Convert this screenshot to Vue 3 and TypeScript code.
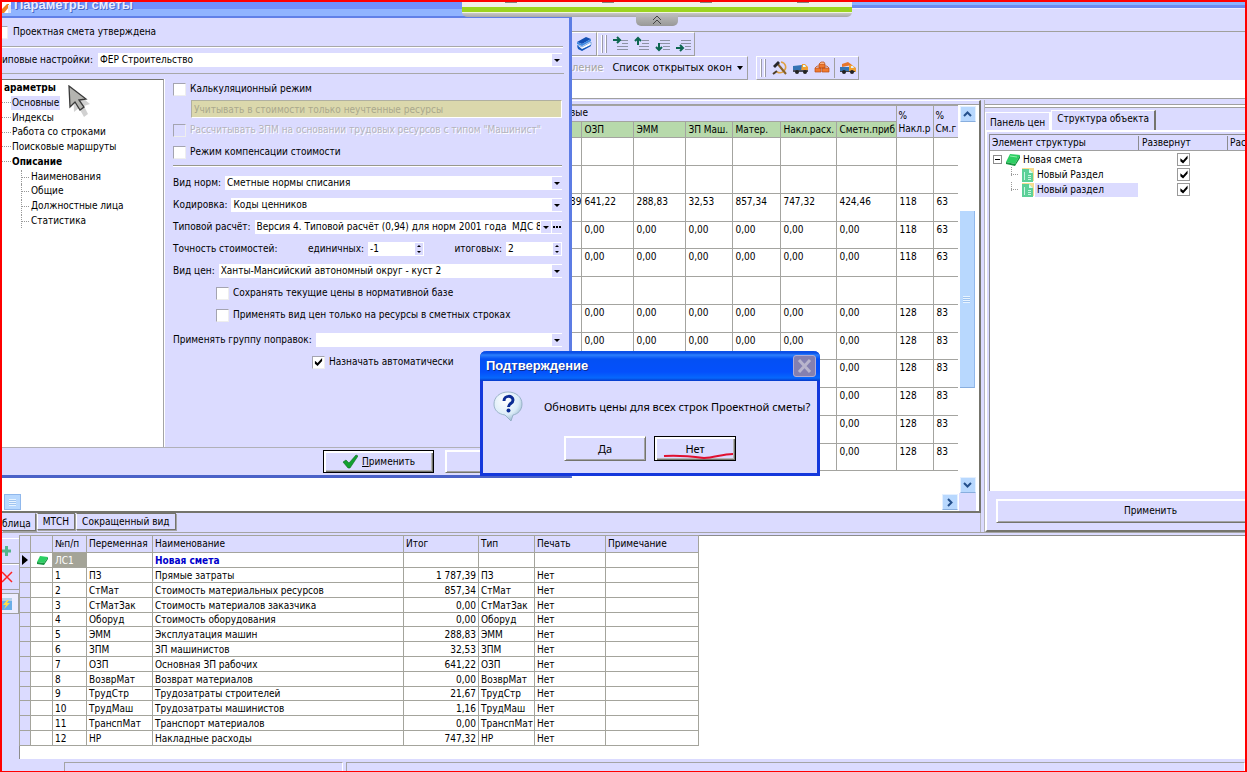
<script setup lang="ts">
import { ref } from 'vue'

interface TreeNode { text: string; level: number; bold?: boolean; active?: boolean }
interface Summary { n: number; code: string; name: string; total: string }

const tree: TreeNode[] = [
  { text: 'араметры', level: 0, bold: true },
  { text: 'Основные', level: 1, active: true },
  { text: 'Индексы', level: 1 },
  { text: 'Работа со строками', level: 1 },
  { text: 'Поисковые маршруты', level: 1 },
  { text: 'Описание', level: 1, bold: true },
  { text: 'Наименования', level: 2 },
  { text: 'Общие', level: 2 },
  { text: 'Должностные лица', level: 2 },
  { text: 'Статистика', level: 2 },
]

const zero = (a: string, b: string): string[] => ['', '0,00', '0,00', '0,00', '0,00', '0,00', '0,00', a, b]
const short = (a: string, b: string): string[] => ['', '', '', '', '', '', '0,00', a, b]
const blank: string[] = Array(9).fill('')
const estimate: string[][] = [
  blank,
  blank,
  ['39', '641,22', '288,83', '32,53', '857,34', '747,32', '424,46', '118', '63'],
  zero('118', '63'),
  zero('118', '63'),
  blank,
  zero('128', '83'),
  zero('128', '83'),
  short('128', '83'),
  short('128', '83'),
  short('128', '83'),
  short('128', '83'),
]
const costHeads = ['ОЗП', 'ЭММ', 'ЗП Маш.', 'Матер.', 'Накл.расх.', 'Сметн.приб']

const summary: Summary[] = [
  { n: 1, code: 'ПЗ', name: 'Прямые затраты', total: '1 787,39' },
  { n: 2, code: 'СтМат', name: 'Стоимость материальных ресурсов', total: '857,34' },
  { n: 3, code: 'СтМатЗак', name: 'Стоимость материалов заказчика', total: '0,00' },
  { n: 4, code: 'Оборуд', name: 'Стоимость оборудования', total: '0,00' },
  { n: 5, code: 'ЭММ', name: 'Эксплуатация машин', total: '288,83' },
  { n: 6, code: 'ЗПМ', name: 'ЗП машинистов', total: '32,53' },
  { n: 7, code: 'ОЗП', name: 'Основная ЗП рабочих', total: '641,22' },
  { n: 8, code: 'ВозврМат', name: 'Возврат материалов', total: '0,00' },
  { n: 9, code: 'ТрудСтр', name: 'Трудозатраты строителей', total: '21,67' },
  { n: 10, code: 'ТрудМаш', name: 'Трудозатраты машинистов', total: '1,16' },
  { n: 11, code: 'ТранспМат', name: 'Транспорт материалов', total: '0,00' },
  { n: 12, code: 'НР', name: 'Накладные расходы', total: '747,32' },
]

const structure = [
  { text: 'Новая смета', root: true, active: false },
  { text: 'Новый Раздел', root: false, active: false },
  { text: 'Новый раздел', root: false, active: true },
]
const expanded = ref([true, true, true])
const autoAssign = ref(true)
const unitDigits = ref('-1')
const totalDigits = ref('2')
</script>

<template>
  <div class="desktop">
    <div class="app-title"></div>
    <div class="menu-strip"></div>

    <div class="toolbars">
      <div class="bar-row first">
        <div class="bar open">
          <button class="tool" aria-label="Справочник">
            <svg width="16" height="16" viewBox="0 0 16 16"><path d="M1 6 10 1l5 2-9 5z" fill="#1450b4" /><path d="M1 6v2l5 2 9-5V3L6 8z" fill="#3c8ae0" /><path d="M2 9l4 2 9-5v3l-9 5-4-2z" fill="#fff" stroke="#5a96d8" stroke-width=".7" /><path d="M1 9l1 4 4 2 9-5V9l-9 4z" fill="#1458bc" /></svg>
          </button>
        </div>
        <div class="bar">
          <i class="grip"></i>
          <button class="tool wide" aria-label="Добавить справа">
            <svg width="16" height="16" viewBox="0 0 16 16"><path d="M7 4.500h8M9 7.500h6M4 10.500h11M4 13.500h11" stroke="#8c92a4" /><path d="M0 4h6M4 1l3 3-3 3" stroke="#0c6650" stroke-width="2" fill="none" /></svg>
          </button>
          <button class="tool wide" aria-label="Переместить вверх">
            <svg width="16" height="16" viewBox="0 0 16 16"><path d="M8 4.500h7M8 7.500h7M5 10.500h10M5 13.500h10" stroke="#8c92a4" /><path d="M4 9V2M1 5l3-3 3 3" stroke="#0c6650" stroke-width="2" fill="none" /></svg>
          </button>
          <button class="tool wide" aria-label="Переместить вниз">
            <svg width="16" height="16" viewBox="0 0 16 16"><path d="M5 4.500h10M5 7.500h10M8 10.500h7M8 13.500h7" stroke="#8c92a4" /><path d="M4 7v7M1 11l3 3 3-3" stroke="#0c6650" stroke-width="2" fill="none" /></svg>
          </button>
          <button class="tool wide" aria-label="Добавить снизу">
            <svg width="16" height="16" viewBox="0 0 16 16"><path d="M5 4.500h10M5 7.500h10M9 10.500h6M9 13.500h6" stroke="#8c92a4" /><path d="M0 12h6M4 9l3 3-3 3" stroke="#0c6650" stroke-width="2" fill="none" /></svg>
          </button>
        </div>
      </div>
      <div class="bar-row second">
        <div class="bar open windows">
          <button class="text-tool" disabled>ление</button>
          <button class="text-tool list">Список открытых окон <i class="caret"></i></button>
        </div>
        <div class="bar">
          <i class="grip"></i>
          <button class="tool wide" aria-label="Работы">
            <svg width="16" height="16" viewBox="0 0 16 16"><path d="M9 2c5 1 6 6 3 9-2 2-5 2-7 1" fill="none" stroke="#e0a040" stroke-width="1.500" /><path d="M5 3l9 11" stroke="#8a6228" stroke-width="2" /><path d="M1 6l5-5 2 2-5 5z" fill="#26262c" /><path d="M1 14l4-3" stroke="#4c3c28" stroke-width="2" /></svg>
          </button>
          <button class="tool wide" aria-label="Машины">
            <svg width="16" height="16" viewBox="0 0 16 16"><path d="M0 6l9-1v5H0z" fill="#3474b4" /><path d="M9 4h3l3 3v4H8z" fill="#f0a030" /><path d="M10 5h2l1 2h-3z" fill="#dff" /><path d="M0 10h15v2H0z" fill="#4a4c5c" /><circle cx="4" cy="12" r="2" fill="#222" /><circle cx="12" cy="12" r="2" fill="#222" /></svg>
          </button>
          <button class="tool wide" aria-label="Материалы">
            <svg width="16" height="16" viewBox="0 0 16 16"><g fill="#f07a30" stroke="#b84c14" stroke-width=".7"><path d="M5 4h6v4H5zM1 8h6v4H1zM8 8h7v4H8z" /><path d="M5 4l2-2h3l1 2M1 8l2-2h2M11 6h2l2 2" fill="#f8b080" /></g></svg>
          </button>
          <i class="divider"></i>
          <button class="tool wide" aria-label="Перевозка">
            <svg width="16" height="16" viewBox="0 0 16 16"><path d="M2 4l6-2 4 3-10 2z" fill="#e8762c" /><path d="M0 7h9v4H0z" fill="#3474b4" /><path d="M9 5h3l4 3v4H9z" fill="#f0a030" /><path d="M11 6h2l1 2h-3z" fill="#def" /><path d="M0 11h15v1H0z" fill="#444" /><circle cx="4" cy="12" r="2" fill="#222" /><circle cx="12" cy="12" r="2" fill="#222" /></svg>
          </button>
        </div>
      </div>
    </div>
    <div class="blank-strip"></div>

    <div class="workspace">
      <div class="left-col">
        <section class="grid-pane">
          <div class="grid-body">
            <table class="estimate">
              <colgroup>
                <col class="c-rest" /><col class="c1" /><col class="c2" /><col class="c3" /><col class="c4" /><col class="c5" /><col class="c6" /><col class="c7" /><col class="c8" />
              </colgroup>
              <thead>
                <tr class="group">
                  <th class="edge">вые</th>
                  <th colspan="6" class="plain"></th>
                  <th rowspan="2" class="two">%<br />Накл.р</th>
                  <th rowspan="2" class="two">%<br />См.г</th>
                </tr>
                <tr class="green"><th></th><th v-for="h in costHeads" :key="h">{{ h }}</th></tr>
              </thead>
              <tbody>
                <tr v-for="(row, i) in estimate" :key="i"><td v-for="(c, k) in row" :key="k">{{ c }}</td></tr>
              </tbody>
            </table>
            <div class="vscroll">
              <button class="sb" aria-label="Вверх"><svg width="9" height="6" viewBox="0 0 9 6"><path d="M1 5l3.500-3.500L8 5" /></svg></button>
              <div class="thumb"><i></i></div>
              <button class="sb" aria-label="Вниз"><svg width="9" height="6" viewBox="0 0 9 6"><path d="M1 1l3.500 3.500L8 1" /></svg></button>
            </div>
          </div>
          <div class="hscroll">
            <div class="hthumb"><i></i></div>
            <button class="sb" aria-label="Вправо"><svg width="6" height="9" viewBox="0 0 6 9"><path d="M1 1l3.500 3.500L1 8" /></svg></button>
            <i class="corner"></i>
          </div>
        </section>
        <div class="low-tabs" role="tablist">
          <button role="tab" class="low-tab on">блица</button>
          <button role="tab" class="low-tab">МТСН</button>
          <button role="tab" class="low-tab">Сокращенный вид</button>
        </div>
      </div>

      <aside class="side">
        <div class="side-grip"></div>
        <div class="side-tabs" role="tablist">
          <button role="tab" class="side-tab">Панель цен</button>
          <button role="tab" class="side-tab on">Структура объекта</button>
        </div>
        <div class="side-page">
          <div class="side-tree">
            <div class="side-row head"><span>Элемент структуры</span><span class="col2">Развернут</span><span class="col3">Рас</span></div>
            <div v-for="(s, i) in structure" :key="i" class="side-row">
              <span class="node" :class="{ child: !s.root }">
                <template v-if="s.root">
                  <i class="minus"></i>
                  <svg width="16" height="14" viewBox="0 0 16 14"><path d="M5 1l10 1-5 9-9-2z" fill="#2ccf62" /><path d="M1 9l9 2 5-9v3l-5 8L1 11z" fill="#159640" /><path d="M5 3l7 1" stroke="#8df0a8" /></svg>
                </template>
                <svg v-else width="14" height="14" viewBox="0 0 14 14"><path d="M1 0h12v13H1z" fill="#f6dc90" /><path d="M1 1h7l4 4v9H1z" fill="#5cd098" /><path d="M8 1v4h4z" fill="#d8fff0" /><path d="M3.500 4v8M7 7.500h3M7 9.500h3M7 11.500h3" stroke="#c8f4e0" /></svg>
                <span class="node-text" :class="{ active: s.active }">{{ s.text }}</span>
              </span>
              <span class="col2 tick"><input v-model="expanded[i]" type="checkbox" class="cb" :aria-label="s.text" /></span>
            </div>
          </div>
          <button class="btn apply-side">Применить</button>
        </div>
      </aside>
    </div>

    <section class="lower">
      <div class="low-body">
        <div class="low-tools">
          <button aria-label="Добавить"><svg width="12" height="14" viewBox="0 0 12 14"><path d="M4.500 2v10M-1 7h10" stroke="#55b58c" stroke-width="3" /></svg></button>
          <button aria-label="Удалить"><svg width="12" height="14" viewBox="0 0 12 14"><path d="M0 2l10 10M10 2L0 12" stroke="#f22" stroke-width="1.500" /></svg></button>
          <button class="boxed" aria-label="Пересчитать"><svg width="12" height="14" viewBox="0 0 12 14"><path d="M0 1h10v12H0z" fill="#6aaee8" /><path d="M0 1h10v3H0z" fill="#b4cfe8" /><path d="M5 3L1 8h3l-2 4 6-6H5l2-3z" fill="#ffdc48" /></svg></button>
        </div>
        <div class="low-table">
          <table class="summary">
            <colgroup>
              <col class="s0" /><col class="s1" /><col class="s2" /><col class="s3" /><col class="s4" /><col class="s5" /><col class="s6" /><col class="s7" /><col class="s8" />
            </colgroup>
            <thead>
              <tr><th></th><th></th><th>№п/п</th><th>Переменная</th><th>Наименование</th><th>Итог</th><th>Тип</th><th>Печать</th><th>Примечание</th></tr>
            </thead>
            <tbody>
              <tr>
                <td class="ind"><i class="current"></i></td>
                <td class="ico"><svg width="13" height="9" viewBox="0 0 13 9"><path d="M4 0l8 1-4 6-7-1z" fill="#2ccf62" /><path d="M1 6l7 1 4-6v2L8 9 1 8z" fill="#159640" /></svg></td>
                <td class="sel">ЛС1</td><td></td><td class="main">Новая смета</td><td></td><td></td><td></td><td></td>
              </tr>
              <tr v-for="r in summary" :key="r.n">
                <td class="ind"></td><td></td><td>{{ r.n }}</td><td>{{ r.code }}</td><td>{{ r.name }}</td><td class="num">{{ r.total }}</td><td>{{ r.code }}</td><td>Нет</td><td></td>
              </tr>
            </tbody>
          </table>
        </div>
      </div>
      <div class="status"><i class="st1"></i><i class="st2"></i></div>
    </section>

    <!-- Estimate parameters window -->
    <div class="params" role="dialog" aria-label="Параметры сметы">
      <div class="params-title">
        <svg width="10" height="12" viewBox="0 0 10 12"><path d="M0 0h9v11H0z" fill="#fff" /><path d="M0 7l5-5h2v3l-5 6H0z" fill="#f08020" /><path d="M6 3h3v8H6z" fill="#e4e4f4" /></svg>
        <span>Параметры сметы</span>
      </div>
      <div class="params-top">
        <input id="approved" type="checkbox" class="cb cut" /><label for="approved">Проектная смета утверждена</label>
      </div>
      <div class="params-preset">
        <label for="preset">иповые настройки:</label>
        <span class="combo"><select id="preset"><option>ФЕР Строительство</option></select></span>
      </div>
      <div class="params-main">
        <ul class="ptree">
          <li v-for="t in tree" :key="t.text" :class="['l' + t.level, { bold: t.bold, active: t.active }]"><span>{{ t.text }}</span></li>
        </ul>
        <div class="form">
          <div class="line"><input id="calc" type="checkbox" class="cb" /><label for="calc">Калькуляционный режим</label></div>
          <div class="line"><input class="muted" aria-label="Режим учёта ресурсов" disabled value="Учитывать в стоимости только неучтенные ресурсы" /></div>
          <div class="line tall"><input id="zpm" type="checkbox" class="cb" disabled /><label for="zpm" class="off">Рассчитывать ЗПМ на основании трудовых ресурсов с типом "Машинист"</label></div>
          <div class="line tall"><input id="comp" type="checkbox" class="cb" /><label for="comp">Режим компенсации стоимости</label></div>
          <hr />
          <div class="line tall"><label for="norm">Вид норм:</label><span class="combo"><select id="norm"><option>Сметные нормы списания</option></select></span></div>
          <div class="line tall"><label for="code">Кодировка:</label><span class="combo"><select id="code"><option>Коды ценников</option></select></span></div>
          <div class="line tall"><label for="calcType">Типовой расчёт:</label><span class="combo dots"><select id="calcType"><option>Версия 4. Типовой расчёт (0,94) для норм 2001 года&nbsp; МДС 8'</option></select><button class="more" aria-label="Выбрать"><i></i><i></i><i></i></button></span></div>
          <div class="line tall digits">
            <span class="cap">Точность стоимостей:</span>
            <label for="unit">единичных:</label><span class="spin"><input id="unit" v-model="unitDigits" /><i></i></span>
            <label for="total" class="right">итоговых:</label><span class="spin"><input id="total" v-model="totalDigits" /><i></i></span>
          </div>
          <div class="line tall"><label for="price">Вид цен:</label><span class="combo"><select id="price"><option>Ханты-Мансийский автономный округ - куст 2</option></select></span></div>
          <div class="line tall in"><input id="keep" type="checkbox" class="cb" /><label for="keep">Сохранять текущие цены в нормативной базе</label></div>
          <div class="line tall in"><input id="only" type="checkbox" class="cb" /><label for="only">Применять вид цен только на ресурсы в сметных строках</label></div>
          <div class="line tall gap"><label for="grp">Применять группу поправок:</label><span class="combo"><select id="grp"><option></option></select></span></div>
          <div class="line tall auto"><input id="auto" v-model="autoAssign" type="checkbox" class="cb" /><label for="auto">Назначать автоматически</label></div>
        </div>
      </div>
      <div class="params-foot">
        <button class="btn default">
          <svg width="16" height="15" viewBox="0 0 16 15"><path d="M1 8l3-2 3 3 7-8 2 1-8 12H6z" fill="#12a030" stroke="#0a6c20" stroke-width=".6" /></svg>
          <span><u>П</u>рименить</span>
        </button>
        <button class="btn" aria-label="Отмена"></button>
      </div>
    </div>

    <!-- Confirmation window -->
    <div class="confirm" role="alertdialog" aria-labelledby="confirmTitle">
      <div class="confirm-title">
        <span id="confirmTitle">Подтверждение</span>
        <button aria-label="Закрыть"><svg width="23" height="22" viewBox="0 0 23 22"><path d="M6 5l11 12M17 5L6 17" stroke="#b8b4cc" stroke-width="3" /></svg></button>
      </div>
      <div class="confirm-body">
        <svg class="bubble" width="32" height="32" viewBox="0 0 32 32">
          <defs><radialGradient id="bub" cx=".4" cy=".3" r=".8"><stop offset="0" stop-color="#fff" /><stop offset=".6" stop-color="#dcecf8" /><stop offset="1" stop-color="#84a8c4" /></radialGradient></defs>
          <path d="M16 2c8 0 14 5 14 12 0 6-4 10-9 11l-2 6-6-6C6 24 2 20 2 14 2 7 8 2 16 2z" fill="url(#bub)" stroke="#8ca8bc" stroke-width=".8" />
          <path d="M12 11c0-6 9-6 9-1 0 4-4.500 3-4.500 7" fill="none" stroke="#0c2c94" stroke-width="3" /><circle cx="16.500" cy="20.500" r="2" fill="#0c2c94" />
        </svg>
        <p>Обновить цены для всех строк Проектной сметы?</p>
      </div>
      <div class="confirm-foot">
        <button class="btn">Да</button>
        <button class="btn default">Нет<svg class="mark" width="72" height="8" viewBox="0 0 72 8"><path d="M1 4c12-1 25 0 40 2 10 0 18-4 29-4" fill="none" stroke="#e01030" stroke-width="2" /></svg></button>
      </div>
    </div>

    <!-- Screen-sharing panel -->
    <div class="share">
      <div class="share-strip"><i></i><i></i><i></i><i></i></div>
      <button class="share-tab" aria-label="Показать панель"><svg width="10" height="10" viewBox="0 0 10 10"><path d="M1 5l4-4 4 4M1 9l4-4 4 4" fill="none" stroke="#444" /></svg></button>
    </div>

    <svg class="pointer" width="24" height="34" viewBox="0 0 24 34">
      <path d="M5 5l1 22 5-4 5 9 4-3-4-8 6-2z" fill="#000" opacity=".18" />
      <path d="M1 1l1 21 5-5 5 8 4-3-5-7 7-1z" fill="#b4b4b0" stroke="#3a3a3a" stroke-width="1.300" />
    </svg>
  </div>
</template>

<style>
body { margin: 0; background: #dbdbff; }
</style>

<style scoped>
* { box-sizing: border-box; }
.desktop {
  position: relative; min-height: 100vh; display: flex; flex-direction: column; overflow: hidden;
  border: 2px solid #f00; background: #dbdbff; color: #000;
  font: 10px/14px "DejaVu Sans Condensed", "Liberation Sans", Arial, sans-serif;
}
button, input, select { font: inherit; color: inherit; border: 0; border-radius: 0; padding: 0; margin: 0; background: none; }
button { white-space: nowrap; }
label { white-space: nowrap; }
svg { display: block; flex: none; }

.app-title { height: 7px; background: linear-gradient(#8ab4ff 50%, #6c8cf0 50%); border-bottom: 1px solid #eef; }
.menu-strip { height: 23px; border-bottom: 1px solid #a0a09c; }
.bar-row { display: flex; padding-left: 570px; }
.bar-row.first { height: 24px; }
.bar-row.second { height: 24px; }
.bar { display: flex; align-items: center; border: 1px solid; border-color: #fff #a0a0a0 #a0a0a0 #fff; }
.bar.open { border-left: 0; }
.grip { width: 6px; align-self: stretch; margin: 2px 3px; border: solid #9a9aa8; border-width: 0 1px; border-left-color: #fff; background: linear-gradient(90deg, #9a9aa8 1px, transparent 1px 3px, #fff 3px 4px, transparent 4px); }
.tool { width: 24px; height: 20px; display: flex; align-items: center; justify-content: center; }
.tool.wide { width: 21px; }
.divider { width: 1px; height: 20px; background: #a0a0a0; margin: 0 2px; }
.windows { width: 176px; margin-right: 8px; gap: 9px; font-size: 11px; }
.text-tool:disabled { color: #a4a4a0; text-shadow: 1px 1px #fff; }
.list { display: flex; align-items: center; gap: 5px; }
.caret { border: 3px solid transparent; border-top: 4px solid #000; border-bottom: 0; }
.blank-strip { height: 19px; background: #fff; border-bottom: 1px solid #a0a0a0; }

.workspace { display: flex; gap: 3px; padding-top: 1px; }
.left-col { flex: 1; min-width: 0; display: flex; flex-direction: column; }
.grid-pane { padding-top: 3px; border-right: 2px solid #74746c; border-bottom: 2px solid #74746c; border-top: 1px solid #fff; background: linear-gradient(#dbdbff 3px, #fff 3px); }
.grid-body { display: flex; border-top: 1px solid #a0a0a0; padding-right: 3px; }
.estimate { flex: 1; table-layout: fixed; width: 0; border-collapse: collapse; align-self: flex-start; }
.c1, .c2 { width: 52px; } .c3 { width: 47px; } .c4 { width: 48px; } .c5 { width: 56px; } .c6 { width: 60px; } .c7 { width: 37px; } .c8 { width: 24px; }
.estimate th, .estimate td { padding: 0 0 0 2px; font-weight: 400; text-align: left; vertical-align: top; border: 1px solid #a4a4a0; overflow: hidden; white-space: nowrap; }
.estimate td { padding-top: 1px; }
.estimate th:last-child, .estimate td:last-child { border-right: 0; }
.estimate .group { height: 16px; background: #dbdbff; }
.estimate .group .edge { padding-left: 567px; border-right: 0; overflow: visible; }
.estimate .group .plain { border-left: 0; }
.estimate .two { line-height: 13px; padding: 3px 0 0 1px; }
.estimate .green { height: 16px; }
.estimate .green th { background: #b7d9ab; vertical-align: middle; }
.estimate .green th:last-child { border-right: 1px solid #a4a4a0; }
.estimate tbody tr { height: 28px; }
.estimate tbody tr:nth-child(4n) { height: 27px; }
.estimate td:first-child { text-align: right; }
.vscroll { width: 18px; display: flex; flex-direction: column; padding: 1px 0 0 2px; min-height: 388px; }
.sb { width: 16px; height: 16px; display: flex; align-items: center; justify-content: center; background: #b8d8fe; border: 1px solid #e4f0ff; border-bottom-color: #88aede; flex: none; }
.sb path { fill: none; stroke: #24508c; stroke-width: 2; }
.thumb { width: 15px; height: 177px; margin: 89px 0 auto; background: #b8d8fe; border-right: 1px solid #90b8ec; border-bottom: 1px solid #88aede; display: flex; align-items: center; justify-content: center; }
.thumb i, .hthumb i { width: 7px; height: 7px; background: repeating-linear-gradient(#e8f4ff 0 1px, #a0c4f0 1px 2px); }
.hscroll { display: flex; height: 18px; align-items: center; padding: 0 3px 0 2px; }
.hthumb { width: 17px; height: 16px; background: #b8d8fe; border: 1px solid #90b8ec; display: flex; align-items: center; justify-content: center; margin-right: auto; }
.corner { width: 17px; height: 18px; background: #dbdbff; margin-left: 1px; }

.side { flex: none; width: 21%; display: flex; flex-direction: column; border-left: 1px solid #b4b4bc; overflow: hidden; }
.side-grip { height: 4px; margin: 4px 0 2px; border: solid #a0a0a0; border-width: 1px 0; background: #fff; flex: none; }
.side-tabs { display: flex; align-items: flex-end; height: 20px; flex: none; }
.side-tab { height: 18px; padding: 2px 4px 0 4px; border: 1px solid #fff; border-width: 1px 2px 0 1px; }
.side-tab.on { height: 20px; padding: 0 5px 3px 5px; border-right: 2px solid #74746c; background: #dbdbff; }
.side-page { flex: 1; border: 2px solid #fff; border-right: 0; border-bottom: 2px solid #74746c; padding: 2px 0 7px 2px; display: flex; flex-direction: column; }
.side-tree { flex: 1; background: #fff; border-left: 1px solid #8c8c90; border-top: 1px solid #8c8c90; }
.side-row { display: flex; height: 15px; align-items: center; white-space: nowrap; }
.side-row.head { height: 16px; background: #dbdbff; border-bottom: 1px solid #a0a0a0; margin-bottom: 1px; }
.side-row > span:first-child { width: 148px; padding-left: 2px; flex: none; }
.side-row .col2 { width: 89px; padding-left: 3px; flex: none; }
.side-row .col3 { padding-left: 2px; overflow: hidden; }
.head .col2, .head .col3 { border-left: 1px solid #8c8c90; }
.tick { display: flex; justify-content: center; }
.node { display: flex; align-items: center; }
.node.child::before { content: ''; width: 8px; height: 15px; margin: 0 2px 0 19px; background: repeating-linear-gradient(90deg, #999 0 1px, transparent 1px 2px) 0 7px / 8px 1px no-repeat, repeating-linear-gradient(#999 0 1px, transparent 1px 2px) 0 0 / 1px 9px no-repeat; }
.minus { width: 9px; height: 9px; margin: 0 3px 0 1px; border: 1px solid #8c8c8c; background: linear-gradient(#000, #000) center / 5px 1px no-repeat; }
.node-text { flex: 1; padding-left: 2px; }
.node-text.active { background: #dbdbff; }

.cb { appearance: none; width: 13px; height: 13px; background: #fff; border: 1px solid; border-color: #a4a4b0 #eee #eee #a4a4b0; flex: none; }
.side .cb { border: 1px solid #999; }
.cb:disabled { background: #dbdbff; }
.cb:checked::before { content: ''; display: block; width: 9px; height: 9px; margin: 1px; background: #000; clip-path: polygon(10% 35%, 40% 60%, 90% 5%, 90% 40%, 40% 95%, 10% 70%); }

.btn { display: inline-flex; align-items: center; justify-content: center; gap: 4px; background: #dbdbff; border: 1px solid; border-color: #fff #74746c #74746c #fff; box-shadow: inset 1px 1px #fff, inset -1px -1px #a4a4a4; }
.btn.default { border: 1px solid #000; box-shadow: inset 2px 2px #fff, inset -1px -1px #74746c, inset -2px -2px #b4b4b4; }
.apply-side { height: 24px; margin: 8px -60px 0 7px; width: calc(100% + 53px); }

.lower { flex: 1; display: flex; flex-direction: column; }
.low-tabs { display: flex; height: 19px; align-items: flex-start; border-right: 1px solid #b4b4bc; }
.low-tab { height: 17px; padding: 0 5px; margin-right: 1px; border: 1px solid; border-color: #74746c #74746c #74746c #fff; box-shadow: 1px 1px #a4a4a4; }
.low-tab.on { height: 18px; padding: 3px 4px 0 0; border-top-color: #dbdbff; border-left: 0; }
.low-body { flex: 1; display: flex; border-top: 1px solid #a4a4a4; padding-top: 2px; min-height: 227px; }
.low-tools { width: 17px; display: flex; flex-direction: column; padding-top: 3px; }
.low-tools button { height: 26px; border-top: 1px solid #fff; border-bottom: 1px solid #a0a0a0; display: flex; align-items: center; }
.low-tools .boxed { border: 1px solid #a0a0a0; border-left: 0; background: #ececff; height: 21px; margin-top: 3px; }
.low-table { flex: 1; background: #fff; border: 1px solid #8c8c8c; border-right: 0; border-bottom: 0; }
.summary { table-layout: fixed; border-collapse: collapse; width: 679px; margin: -1px 0 0 -1px; }
.s0 { width: 11px; } .s1 { width: 22px; } .s2 { width: 34px; } .s3 { width: 66px; } .s4 { width: 251px; } .s5 { width: 75px; } .s6 { width: 56px; } .s7 { width: 71px; } .s8 { width: 93px; }
.summary th { height: 17px; background: #dbdbff; font-weight: 400; text-align: left; }
.summary th, .summary td { border: 1px solid #a4a49c; padding: 0 0 0 2px; white-space: nowrap; overflow: hidden; }
.summary td { line-height: 13px; height: 15px; }
.summary tr:nth-child(5n) td { height: 14px; }
.summary .ind { background: #dbdbff; padding: 0; }
.summary .num { text-align: right; padding-right: 2px; }
.summary .sel { background: #a4a498; color: #fff; }
.summary .main { font-weight: 700; color: #00c; }
.summary .ico { padding-left: 5px; }
.current { display: block; width: 0; border: 5px solid transparent; border-left: 6px solid #000; border-right: 0; margin-left: 2px; }
.status { height: 12px; display: flex; gap: 3px; padding: 3px 0 0 62px; }
.status i { border: 1px solid #a4a4a4; border-right-color: #fff; border-bottom: 0; }
.st1 { width: 279px; } .st2 { flex: 1; }

.params { position: absolute; left: 0; top: 0; width: 570px; display: flex; flex-direction: column; background: #dbdbff; border-right: 3px solid #5c7ce4; border-bottom: 3px solid #4a62c8; }
.params-title { height: 16px; overflow: hidden; display: flex; gap: 2px; background: linear-gradient(#7090fc 50%, #90b4ff 50%); border-bottom: 2px solid #6080e8; color: #e8ecff; font: 700 13px/8px "Liberation Sans", Arial, sans-serif; }
.params-title span { height: 14px; line-height: 6px; text-shadow: 1px 1px #4868c8; }
.params-top { height: 29px; margin-right: 6px; display: flex; align-items: center; gap: 5px; border-bottom: 1px solid #a8a8a8; box-shadow: 0 1px #fff; }
.cb.cut { width: 6px; border-left: 0; }
.params-preset { height: 27px; margin-right: 5px; padding-right: 2px; display: flex; align-items: center; gap: 5px; border-bottom: 1px solid #a8a8a8; }
.combo { flex: 1; min-width: 0; display: flex; position: relative; background: #fff; height: 14px; }
.combo select { appearance: none; flex: 1; min-width: 0; height: 14px; padding: 0 14px 0 2px; }
.combo::after { content: ''; position: absolute; right: 0; top: 1px; width: 10px; height: 12px; pointer-events: none; background: #dbdbff; }
.combo::before { content: ''; position: absolute; right: 2px; top: 6px; border: 3px solid transparent; border-top: 3px solid #000; border-bottom: 0; pointer-events: none; z-index: 1; }
.combo.dots::after { right: 11px; }
.combo.dots::before { right: 13px; }
.combo.dots select { padding-right: 12px; }
.more { width: 10px; height: 12px; margin-top: 1px; background: #dbdbff; display: flex; align-items: center; justify-content: center; gap: 1px; }
.more i { width: 2px; height: 2px; background: #000; }
.params-main { display: flex; margin-top: 5px; border-bottom: 1px solid #b0b0b8; }
.ptree { width: 162px; margin: 0; padding: 0; list-style: none; background: #fff; border-top: 1px solid #74746c; border-right: 1px solid #a4a4a4; flex: none; }
.ptree li { height: 15px; display: flex; align-items: center; }
.ptree li:nth-child(4n) { height: 14px; }
.ptree span { padding: 0 1px; }
.ptree .bold { font-weight: 700; }
.ptree .active span { background: #dbdbff; }
.ptree .l0 { padding-left: 1px; }
.ptree .l1::before { content: ''; width: 9px; border-top: 1px dotted #999; }
.ptree .l2::before { content: ''; width: 8px; height: 14px; margin: 0 0 0 19px; border-left: 1px dotted #999; background: repeating-linear-gradient(90deg, #999 0 1px, transparent 1px 2px) 0 7px / 8px 1px no-repeat; }
.form { flex: 1; min-width: 0; padding: 0 7px 74px 8px; border-left: 1px solid #fff; }
.line { height: 20px; display: flex; align-items: center; gap: 4px; }
.line.tall { height: 22px; }
.line.in { padding-left: 43px; }
.line.gap { margin-top: 3px; }
.line.auto { padding-left: 139px; }
.form hr { margin: 2px 0 5px; border: 0; height: 2px; background: linear-gradient(#98988c 50%, #fff 50%); }
.muted { flex: 1; height: 18px; margin-left: 18px; padding-left: 2px; background: #dbd8ac; color: #aaa88c; border: 1px solid; border-color: #b0b0a0 #fff #fff #b0b0a0; }
.off { color: #b4b4bc; text-shadow: 1px 1px #fff; }
.cap { width: 131px; white-space: nowrap; }
.right { margin-left: auto; }
.spin { width: 56px; height: 14px; background: #fff; display: flex; align-items: center; }
.spin input { flex: 1; min-width: 0; height: 14px; padding-left: 2px; }
.spin i { width: 8px; height: 12px; margin-right: 1px; background: #dbdbff; display: flex; flex-direction: column; justify-content: space-between; align-items: center; padding: 2px 0; }
.spin i::before, .spin i::after { content: ''; border: 2px solid transparent; }
.spin i::before { border-bottom-color: #000; border-top: 0; }
.spin i::after { border-top-color: #000; border-bottom: 0; }
.params-foot { height: 27px; display: flex; gap: 11px; padding: 2px 0 0 321px; }
.params-foot .btn { width: 111px; height: 23px; }

.confirm { position: absolute; left: 478px; top: 349px; width: 340px; height: 125px; display: flex; flex-direction: column; background: #dbdbff; border: 3px solid #1438dc; border-top: 0; border-radius: 6px 6px 0 0; }
.confirm-title { height: 30px; margin: 0 -3px; padding: 0 4px 0 6px; display: flex; align-items: center; justify-content: space-between; color: #fff; background: linear-gradient(#0a50e8 0 2px, #2c80fc 4px, #0450f4 8px, #0450fc 70%, #0668fc 90%, #0838c8); border-radius: 6px 6px 0 0; font: 700 13px/16px "Liberation Sans", Arial, sans-serif; text-shadow: 1px 1px #0a2c90; }
.confirm-title button { width: 23px; height: 22px; background: #8480b0; border: 1px solid #b0acd4; border-radius: 3px; display: flex; align-items: center; justify-content: center; }
.confirm-body { display: flex; align-items: center; gap: 20px; padding: 9px 0 0 9px; height: 41px; }
.confirm-body p { margin: 0; padding-top: 2px; white-space: nowrap; font: 11px/14px "Noto Sans", "Liberation Sans", sans-serif; }
.confirm-foot { display: flex; justify-content: center; gap: 8px; padding-top: 14px; }
.confirm-foot .btn { width: 82px; height: 25px; position: relative; font: 11px/14px "Noto Sans", "Liberation Sans", sans-serif; }
.mark { position: absolute; left: 8px; bottom: 0; }

.share { position: absolute; left: 460px; top: 0; width: 390px; display: flex; flex-direction: column; align-items: center; }
.share-strip { width: 100%; height: 15px; background: linear-gradient(#f0f0e8 0 5px, #9cd420 5px 10px, #f0f4e0 10px 11px, #c8c8c8 11px, #a8a8a8); border-radius: 0 0 5px 5px; display: flex; justify-content: space-around; }
.share-strip i { width: 12px; height: 1px; background: #848480; }
.share-tab { width: 42px; height: 13px; margin-top: -4px; background: linear-gradient(#c0c0c0, #989898); border-radius: 0 0 5px 5px; display: flex; align-items: center; justify-content: center; }
.pointer { position: absolute; left: 66px; top: 83px; }
</style>
